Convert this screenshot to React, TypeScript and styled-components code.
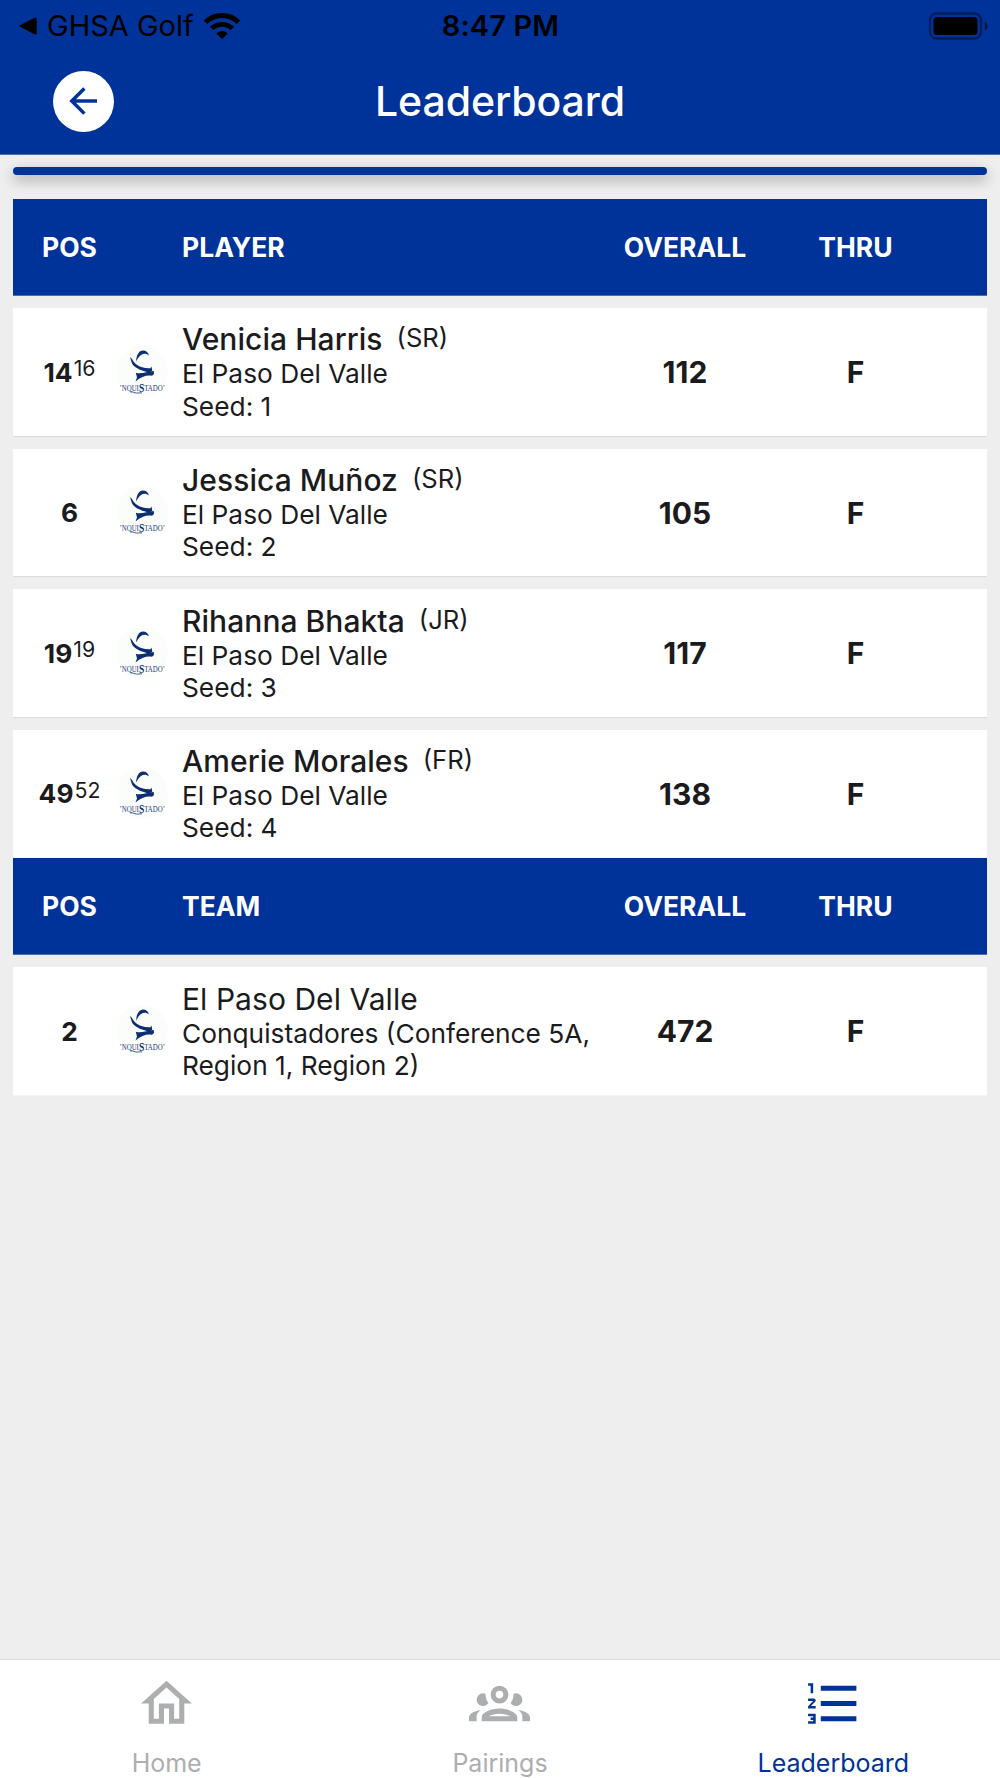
import React from "react";
import styled, { createGlobalStyle } from "styled-components";

const BLUE = "#003399";
const INK = "#1b1b1e";
const MUTED = "#adaeb0";

const GlobalStyle = createGlobalStyle`
  * { box-sizing: border-box; }
  body { margin: 0; background: #eeeeee; }
`;

const Screen = styled.div`
  width: 1000px;
  height: 1778px;
  display: flex;
  flex-direction: column;
  background: #eeeeee;
  color: ${INK};
  font-family: Inter, "Liberation Sans", sans-serif;
  overflow: hidden;
`;

const TopBar = styled.header`
  flex: none;
  height: 155px;
  background: ${BLUE};
  border-bottom: 1px solid #4a6db5;
`;

const StatusBar = styled.div`
  height: 50px;
  padding: 0 12px 0 18px;
  display: grid;
  grid-template-columns: 1fr auto 1fr;
  align-items: center;
  color: #000;
`;

const StatusLeft = styled.div`
  display: flex;
  align-items: center;
  white-space: nowrap;
`;

const BackApp = styled.span`
  margin-left: 10px;
  padding-top: 1px;
  width: 156px;
  font-size: 29px;
  line-height: 50px;
`;

const Clock = styled.span`
  padding: 1px 5px 0 0;
  font-size: 29px;
  font-weight: 600;
  line-height: 50px;
  letter-spacing: 0.1px;
`;

const StatusRight = styled.div`
  display: flex;
  justify-content: flex-end;
`;

const NavBar = styled.div`
  height: 103px;
  padding: 0 53px;
  display: grid;
  grid-template-columns: 61px 1fr 61px;
  align-items: center;
`;

const BackButton = styled.button`
  width: 61px;
  height: 61px;
  margin: 0;
  padding: 0 2px 1px 0;
  border: 0;
  border-radius: 50%;
  background: #fff;
  color: ${BLUE};
  display: flex;
  align-items: center;
  justify-content: center;
`;

const Title = styled.h1`
  margin: 0;
  padding-bottom: 2px;
  font-size: 41px;
  line-height: 60px;
  font-weight: 500;
  letter-spacing: -0.1px;
  text-align: center;
  color: #fff;
`;

const Content = styled.main`
  flex: 1;
  padding: 12.4px 13px 0;
`;

const Divider = styled.div`
  height: 7.3px;
  margin-bottom: 24.3px;
  border-radius: 4px;
  background: ${BLUE};
  box-shadow: 0 5px 13px rgba(0, 0, 0, 0.32);
`;

const Columns = styled.div`
  display: grid;
  grid-template-columns: 87px 57px 432px 166px 175px;
  padding-left: 13px;
  align-items: center;
`;

const TableHead = styled(Columns)`
  height: 97px;
  background: ${BLUE};
  border-bottom: 1px solid #4a6db5;
  color: #fff;
  font-size: 26.5px;
  font-weight: 700;
`;

const HeadCell = styled.span<{ $start?: boolean }>`
  text-align: ${(p) => (p.$start ? "left" : "center")};
  grid-column: ${(p) => (p.$start ? "3" : "auto")};
  padding-left: ${(p) => (p.$start ? "12px" : "0")};
`;

const Rows = styled.div`
  display: flex;
  flex-direction: column;
  gap: 12px;
  padding-top: 12px;
`;

const Row = styled(Columns)`
  height: 128.56px;
  padding-top: 1px;
  background: #fff;
  border-bottom: 1px solid #d9dae0;
  &:last-child {
    border-bottom-color: #f4f4f4;
  }
`;

const Position = styled.div`
  display: flex;
  justify-content: center;
  align-items: center;
  font-size: 26.3px;
  font-weight: 700;
  line-height: 33px;
`;

const Previous = styled.span`
  margin: -7px 0 0 1px;
  font-size: 21.3px;
  font-weight: 400;
`;

const Badge = styled.div`
  display: flex;
  justify-content: center;
  padding-bottom: 1px;
`;

const Info = styled.div`
  padding-left: 12px;
  font-size: 26.3px;
  line-height: 32.3px;
`;

const NameLine = styled.div`
  display: flex;
  line-height: 37px;
`;

const Name = styled.span<{ $light?: boolean }>`
  font-size: 30px;
  font-weight: ${(p) => (p.$light ? 400 : 500)};
  letter-spacing: 0.05px;
`;

const Grade = styled.span`
  margin: -2px 0 0 14px;
  height: 37px;
  font-size: 25.6px;
`;

const Score = styled.span`
  text-align: center;
  font-size: 30px;
  font-weight: 700;
`;

const TabBar = styled.nav`
  flex: none;
  height: 119px;
  background: #fff;
  border-top: 1px solid #dcdcdc;
  display: grid;
  grid-template-columns: repeat(3, 1fr);
`;

const Tab = styled.div<{ $active?: boolean }>`
  display: flex;
  flex-direction: column;
  align-items: center;
  padding-top: 13px;
  color: ${(p) => (p.$active ? BLUE : MUTED)};
  font-size: 25px;
  line-height: 30px;
`;

const TabLabel = styled.span`
  margin-top: 14px;
`;

const Icon = ({ d, size }: { d: string; size: number }) => (
  <svg width={size} height={size} viewBox="0 0 24 24" fill="currentColor">
    <path d={d} />
  </svg>
);

const icons = {
  back: "M20,11V13H8L13.5,18.5L12.08,19.92L4.16,12L12.08,4.08L13.5,5.5L8,11H20Z",
  home: "M12 5.69L17 10.19V18H15V12H9V18H7V10.19L12 5.69M12 3L2 12H5V20H11V14H13V20H19V12H22",
  group:
    "M12,5A3.5,3.5 0 0,0 8.5,8.5A3.5,3.5 0 0,0 12,12A3.5,3.5 0 0,0 15.5,8.5A3.5,3.5 0 0,0 12,5M12,7A1.5,1.5 0 0,1 13.5,8.5A1.5,1.5 0 0,1 12,10A1.5,1.5 0 0,1 10.5,8.5A1.5,1.5 0 0,1 12,7M5.5,8A2.5,2.5 0 0,0 3,10.5C3,11.44 3.53,12.25 4.29,12.68C4.65,12.88 5.06,13 5.5,13C5.94,13 6.35,12.88 6.71,12.68C7.08,12.47 7.39,12.17 7.62,11.81C6.89,10.86 6.5,9.7 6.5,8.5C6.5,8.41 6.5,8.31 6.5,8.22C6.2,8.08 5.86,8 5.5,8M18.5,8C18.14,8 17.8,8.08 17.5,8.22C17.5,8.31 17.5,8.41 17.5,8.5C17.5,9.7 17.11,10.86 16.38,11.81C16.5,12 16.63,12.15 16.78,12.3C16.94,12.45 17.1,12.58 17.29,12.68C17.65,12.88 18.06,13 18.5,13C18.94,13 19.35,12.88 19.71,12.68C20.47,12.25 21,11.44 21,10.5A2.5,2.5 0 0,0 18.5,8M12,14C9.66,14 5,15.17 5,17.5V19H19V17.5C19,15.17 14.34,14 12,14M4.71,14.55C2.78,14.78 0,15.76 0,17.5V19H3V17.07C3,16.06 3.69,15.22 4.71,14.55M19.29,14.55C20.31,15.22 21,16.06 21,17.07V19H24V17.5C24,15.76 21.22,14.78 19.29,14.55M12,16C13.53,16 15.24,16.5 16.23,17H7.77C8.76,16.5 10.47,16 12,16Z",
  list: "M7,13V11H21V13H7M7,19V17H21V19H7M7,7V5H21V7H7M3,8V5H2V4H4V8H3M2,17V16H5V20H2V19H4V18.5H3V17.5H4V17H2M4.25,10A0.75,0.75 0 0,1 5,10.75C5,10.95 4.92,11.14 4.79,11.27L3.12,13H5V14H2V13.08L4,11H2V10H4.25Z",
};

const LogoSvg = styled.svg`
  display: block;
  overflow: visible;
`;

const TeamLogo = () => (
  <LogoSvg width="52" height="52" viewBox="0 0 52 52">
    <circle cx="26" cy="26" r="26" fill="#fbfdfb" />
    <g fill="#0b2f70">
      <path d="M20.2 15.5C20.2 9.5 23 4.6 27 4.6C30 4.6 32 6.5 33 9.5C30.5 7.3 27.5 7.2 25 9C22.5 10.8 21.5 13 20.2 15.5Z" />
      <path d="M14 11C16.5 12.5 17 16 20.5 18.5C24.5 21.5 29 22.5 34.5 22.2L35.5 20.5L36.3 24.5C35 26.5 32 27 28.5 25.3C22 23.5 16.5 20 15.5 16Z" />
      <path d="M19.8 26.8C25 28.5 31 25.5 37.8 25L38 28L36 29.8C30.5 29 25.5 30.5 19.5 35.5L21 31.5Z" />
    </g>
    <text
      x="3.5"
      y="44.5"
      fill="#22407c"
      fontFamily='"Liberation Serif", serif'
      fontSize="8.6"
      textLength="45.5"
      lengthAdjust="spacingAndGlyphs"
    >
      ’NQUI
      <tspan dy="1.5" fontSize="12" fontWeight="700" fill="#0b2f70">S</tspan>
      <tspan dy="-1.5">TADO’</tspan>
    </text>
    <path d="M15 45.5Q20 48 26 46.8" fill="none" stroke="#33508a" strokeWidth="0.9" />
  </LogoSvg>
);

const WifiIcon = () => (
  <svg width="38" height="28" viewBox="0 0 38 28">
    <g fill="none" stroke="#000">
      <path d="M2.5 10.2A23.5 23.5 0 0 1 35.5 10.2" strokeWidth="5" />
      <path d="M8.6 16.5A15 15 0 0 1 29.4 16.5" strokeWidth="4.8" />
    </g>
    <path d="M13.3 21.4A8.1 8.1 0 0 1 24.7 21.4L19 27.2Z" />
  </svg>
);

const BatteryIcon = () => (
  <svg width="60" height="28" viewBox="0 0 60 28">
    <rect x="2" y="1.5" width="51" height="25" rx="6.5" fill="none" stroke="#000" strokeOpacity="0.4" strokeWidth="2.3" />
    <rect x="5.5" y="5" width="44" height="18" rx="3.5" />
    <path d="M56.7 9.3Q59.8 11 59.8 14T56.7 18.7Z" fillOpacity="0.5" />
  </svg>
);

type Entry = {
  pos: number;
  prev?: number;
  name: string;
  grade?: string;
  lines: string[];
  overall: number;
};

const players: Entry[] = [
  { pos: 14, prev: 16, name: "Venicia Harris", grade: "SR", lines: ["El Paso Del Valle", "Seed: 1"], overall: 112 },
  { pos: 6, name: "Jessica Muñoz", grade: "SR", lines: ["El Paso Del Valle", "Seed: 2"], overall: 105 },
  { pos: 19, prev: 19, name: "Rihanna Bhakta", grade: "JR", lines: ["El Paso Del Valle", "Seed: 3"], overall: 117 },
  { pos: 49, prev: 52, name: "Amerie Morales", grade: "FR", lines: ["El Paso Del Valle", "Seed: 4"], overall: 138 },
];

const teams: Entry[] = [
  { pos: 2, name: "El Paso Del Valle", lines: ["Conquistadores (Conference 5A, Region 1, Region 2)"], overall: 472 },
];

const Table = ({ label, entries }: { label: string; entries: Entry[] }) => (
  <section>
    <TableHead>
      <HeadCell>POS</HeadCell>
      <HeadCell $start>{label}</HeadCell>
      <HeadCell>OVERALL</HeadCell>
      <HeadCell>THRU</HeadCell>
    </TableHead>
    <Rows>
      {entries.map((e) => (
        <Row key={e.name}>
          <Position>
            {e.pos}
            {e.prev && <Previous>{e.prev}</Previous>}
          </Position>
          <Badge>
            <TeamLogo />
          </Badge>
          <Info>
            <NameLine>
              <Name $light={!e.grade}>{e.name}</Name>
              {e.grade && <Grade>({e.grade})</Grade>}
            </NameLine>
            {e.lines.map((l) => (
              <div key={l}>{l}</div>
            ))}
          </Info>
          <Score>{e.overall}</Score>
          <Score>F</Score>
        </Row>
      ))}
    </Rows>
  </section>
);

export default function App() {
  return (
    <Screen>
      <GlobalStyle />
      <TopBar>
        <StatusBar>
          <StatusLeft>
            <svg width="19" height="18" viewBox="0 0 19 18">
              <path d="M0.5 9L17 0.5Q18.7 0 18.7 2V16Q18.7 18 17 17.5Z" />
            </svg>
            <BackApp>GHSA Golf</BackApp>
            <WifiIcon />
          </StatusLeft>
          <Clock>8:47 PM</Clock>
          <StatusRight>
            <BatteryIcon />
          </StatusRight>
        </StatusBar>
        <NavBar>
          <BackButton aria-label="Back">
            <Icon d={icons.back} size={42} />
          </BackButton>
          <Title>Leaderboard</Title>
        </NavBar>
      </TopBar>
      <Content>
        <Divider />
        <Table label="PLAYER" entries={players} />
        <Table label="TEAM" entries={teams} />
      </Content>
      <TabBar>
        <Tab>
          <Icon d={icons.home} size={61} />
          <TabLabel>Home</TabLabel>
        </Tab>
        <Tab>
          <Icon d={icons.group} size={61} />
          <TabLabel>Pairings</TabLabel>
        </Tab>
        <Tab $active>
          <Icon d={icons.list} size={61} />
          <TabLabel>Leaderboard</TabLabel>
        </Tab>
      </TabBar>
    </Screen>
  );
}
